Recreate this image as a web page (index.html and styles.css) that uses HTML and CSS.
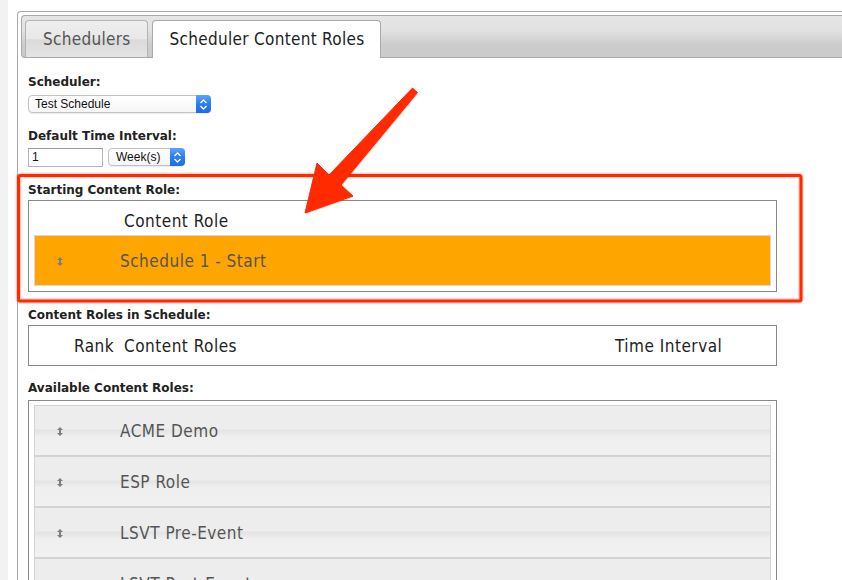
FILE: index.html
```html
<!DOCTYPE html>
<html>
<head>
<meta charset="utf-8">
<title>Scheduler Content Roles</title>
<link rel="stylesheet" href="styles.css">
</head>
<body>
<div class="tabs">
  <div class="nav">
    <div class="tab">Schedulers</div>
    <div class="tab active">Scheduler Content Roles</div>
  </div>
  <div class="panel">
    <div class="label">Scheduler:</div>
    <div class="select sel-sched">
      <span class="sel-text">Test Schedule</span>
      <span class="stepper"><svg width="9" height="13" viewBox="0 0 9 13"><path d="M1.5 5 L4.5 2 L7.5 5 M1.5 8 L4.5 11 L7.5 8" fill="none" stroke="#fff" stroke-width="1.4"/></svg></span>
    </div>
    <div class="label gap">Default Time Interval:</div>
    <div class="interval-row">
      <div class="input">1</div>
      <div class="select sel-week">
        <span class="sel-text">Week(s)</span>
        <span class="stepper"><svg width="9" height="13" viewBox="0 0 9 13"><path d="M1.5 5 L4.5 2 L7.5 5 M1.5 8 L4.5 11 L7.5 8" fill="none" stroke="#fff" stroke-width="1.4"/></svg></span>
      </div>
    </div>
    <div class="label gap tight">Starting Content Role:</div>
    <div class="box box-start">
      <div class="box-head">Content Role</div>
      <div class="role-row selected">
        <span class="handle"><svg width="6" height="9" viewBox="0 0 6 9"><path d="M3 0 L6 3 H4 V6 H6 L3 9 L0 6 H2 V3 H0 Z" fill="#7d7d7d"/></svg></span>
        <span class="role-name">Schedule 1 - Start</span>
      </div>
    </div>
    <div class="label gap tight">Content Roles in Schedule:</div>
    <div class="box box-sched">
      <span>Rank</span><span>Content Roles</span><span>Time Interval</span>
    </div>
    <div class="label gap2">Available Content Roles:</div>
    <div class="box box-avail">
      <div class="role-row">
        <span class="handle"><svg width="6" height="9" viewBox="0 0 6 9"><path d="M3 0 L6 3 H4 V6 H6 L3 9 L0 6 H2 V3 H0 Z" fill="#7d7d7d"/></svg></span>
        <span class="role-name">ACME Demo</span>
      </div>
      <div class="role-row">
        <span class="handle"><svg width="6" height="9" viewBox="0 0 6 9"><path d="M3 0 L6 3 H4 V6 H6 L3 9 L0 6 H2 V3 H0 Z" fill="#7d7d7d"/></svg></span>
        <span class="role-name">ESP Role</span>
      </div>
      <div class="role-row">
        <span class="handle"><svg width="6" height="9" viewBox="0 0 6 9"><path d="M3 0 L6 3 H4 V6 H6 L3 9 L0 6 H2 V3 H0 Z" fill="#7d7d7d"/></svg></span>
        <span class="role-name">LSVT Pre-Event</span>
      </div>
      <div class="role-row">
        <span class="handle"><svg width="6" height="9" viewBox="0 0 6 9"><path d="M3 0 L6 3 H4 V6 H6 L3 9 L0 6 H2 V3 H0 Z" fill="#7d7d7d"/></svg></span>
        <span class="role-name">LSVT Post-Event</span>
      </div>
    </div>
  </div>
</div>
<svg class="annot" width="842" height="580" viewBox="0 0 842 580">
  <rect x="18.5" y="175.5" width="782.5" height="125.5" rx="2" fill="none" stroke="rgba(255,60,40,0.25)" stroke-width="5.5"/>
  <rect x="18.5" y="175.5" width="782.5" height="125.5" rx="2" fill="none" stroke="#ff2a00" stroke-width="3"/>
  <polygon points="305,213 317,163 329,175 412.5,88 417.5,92.5 341,185 353,196" fill="rgba(120,0,0,0.18)" transform="translate(0.8,1.2)"/>
  <polygon points="305,213 317,163 329,175 412.5,88 417.5,92.5 341,185 353,196" fill="#ff2a00" stroke="#ff2a00" stroke-width="1" stroke-linejoin="round"/>
</svg>
</body>
</html>
```
FILE: styles.css
```css
html, body {
  margin: 0;
  padding: 0;
  overflow: hidden;
}
body {
  width: 842px;
  height: 580px;
  position: relative;
  background: linear-gradient(to right, #f2f2f2 0, #f2f2f2 8px, #ffffff 8px);
  font-family: "DejaVu Sans", Verdana, sans-serif;
  color: #222;
}
.tabs {
  margin: 11px 0 0 17px;
  width: 900px;
  height: 640px;
  border: 1px solid #aaaaaa;
  border-right: none;
  border-radius: 4px 0 0 0;
  padding: 3px 0 0 3px;
  box-sizing: border-box;
  background: #fff;
}
.nav {
  display: flex;
  align-items: flex-end;
  height: 41px;
  padding: 0 0 0 3px;
  border: 1px solid #aaaaaa;
  border-right: none;
  border-radius: 4px 0 0 4px;
  background: linear-gradient(to bottom, #e5e5e5 0%, #e2e2e2 35%, #cccccc 70%, #cbcbcb 100%);
}
.tab {
  height: 37px;
  box-sizing: border-box;
  padding: 0 16px 0 17px;
  margin-right: 4px;
  border: 1px solid #b4b4b4;
  border-bottom: none;
  border-radius: 4px 4px 0 0;
  background: linear-gradient(to bottom, #eeeeee 0%, #e8e8e8 50%, #dadada 52%, #e4e4e4 100%);
  font-family: "DejaVu Sans Condensed", "DejaVu Sans", sans-serif;
  font-size: 17px;
  letter-spacing: 0.3px;
  line-height: 37px;
  color: #555;
}
.tab.active {
  height: 38px;
  margin-bottom: -1px;
  background: #ffffff;
  border-color: #aaaaaa;
  color: #212121;
}
.panel {
  padding: 17px 0 0 7px;
}
.label {
  font-family: "DejaVu Sans", Verdana, sans-serif;
  font-weight: bold;
  font-size: 12px;
  line-height: 15px;
  color: #222;
  margin-bottom: 5px;
}
.label.gap {
  margin-top: 16px;
  margin-bottom: 4px;
}
.label.tight {
  margin-bottom: 2px;
}
.label.gap2 {
  margin-top: 15px;
  margin-bottom: 4px;
}
.select {
  display: flex;
  align-items: stretch;
  height: 18px;
  box-sizing: border-box;
  border: 1px solid #c3c3c3;
  border-radius: 4px;
  background: linear-gradient(to bottom, #ffffff, #f6f6f6);
  box-shadow: 0 1px 1px rgba(0,0,0,0.08);
  font-family: "Liberation Sans", Arial, sans-serif;
  font-size: 12px;
  color: #111;
}
.sel-sched {
  width: 183px;
}
.sel-week {
  width: 77px;
  margin-left: 5px;
}
.sel-text {
  flex: 1;
  line-height: 16px;
  padding-left: 6px;
}
.sel-week .sel-text {
  padding-left: 7px;
}
.stepper {
  width: 15px;
  margin: -1px -1px -1px 0;
  border-radius: 0 4px 4px 0;
  background: linear-gradient(to bottom, #5ba3fb, #2a7df2 50%, #1a6ee9);
  display: flex;
  align-items: center;
  justify-content: center;
}
.interval-row {
  display: flex;
  align-items: flex-start;
}
.input {
  width: 75px;
  height: 19px;
  box-sizing: border-box;
  border: 1px solid #b5b5b5;
  border-top-color: #9c9c9c;
  font-family: "Liberation Sans", Arial, sans-serif;
  font-size: 12px;
  line-height: 17px;
  padding-left: 3px;
  color: #111;
}
.box {
  width: 749px;
  box-sizing: border-box;
  border: 1px solid #888888;
  font-family: "DejaVu Sans Condensed", "DejaVu Sans", sans-serif;
  font-size: 17px;
  letter-spacing: 0.5px;
  line-height: 20px;
  color: #222;
}
.box-start {
  padding: 0 5px 5px 5px;
}
.box-head {
  padding: 10px 0 4px 90px;
}
.role-row {
  display: flex;
  align-items: center;
  height: 51px;
  box-sizing: border-box;
  border: 1px solid #d3d3d3;
  background: linear-gradient(to bottom, #ededed 0%, #ededed 46%, #e4e4e4 50%, #efefef 62%, #f1f1f1 100%);
  color: #555;
}
.role-row.selected {
  background: #ffa500;
  border-color: #d6d6dc;
  color: #555;
}
.handle {
  display: flex;
  width: 6px;
  margin-left: 22px;
  margin-top: 1px;
}
.role-name {
  margin-left: 57px;
  padding-top: 1px;
}
.box-sched {
  display: grid;
  grid-template-columns: 50px 491px auto;
  padding: 10px 0 9px 45px;
}
.box-avail {
  padding: 4px 5px 0 5px;
  height: 300px;
}
.annot {
  position: absolute;
  left: 0;
  top: 0;
  pointer-events: none;
}
```
